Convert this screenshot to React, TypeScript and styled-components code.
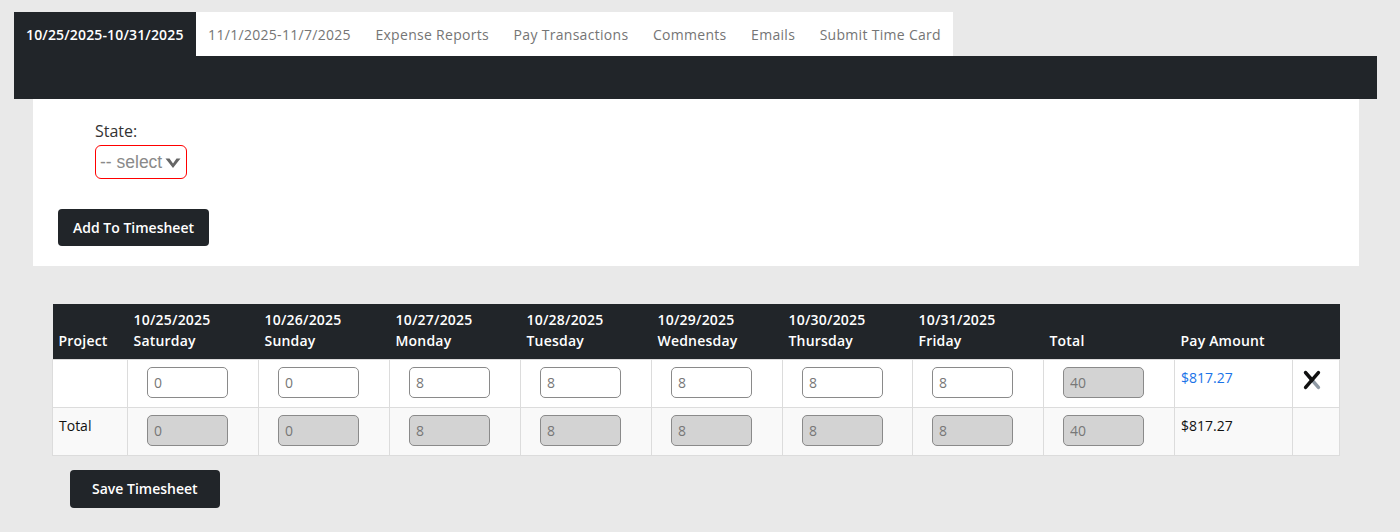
import React from "react";
import styled, { createGlobalStyle } from "styled-components";

const GlobalStyle = createGlobalStyle`
  html, body {
    margin: 0;
    padding: 0;
    background-color: #e9e9e9;
    font-family: "Open Sans", "Liberation Sans", sans-serif;
  }
`;

const tabs = [
  "10/25/2025-10/31/2025",
  "11/1/2025-11/7/2025",
  "Expense Reports",
  "Pay Transactions",
  "Comments",
  "Emails",
  "Submit Time Card",
];

const days = [
  { date: "10/25/2025", name: "Saturday", hours: 0 },
  { date: "10/26/2025", name: "Sunday", hours: 0 },
  { date: "10/27/2025", name: "Monday", hours: 8 },
  { date: "10/28/2025", name: "Tuesday", hours: 8 },
  { date: "10/29/2025", name: "Wednesday", hours: 8 },
  { date: "10/30/2025", name: "Thursday", hours: 8 },
  { date: "10/31/2025", name: "Friday", hours: 8 },
];

const colWidths = [75, 131, 131, 131, 131, 131, 130, 131, 131, 118, 47];

const App = () => {
  const total = days.reduce((a, d) => a + d.hours, 0);

  return (
    <Page>
      <GlobalStyle />
      <TabsWrapper>
        <TabList>
          {tabs.map((t, idx) => (
            <Tab key={t} $active={idx === 0}>
              {t}
            </Tab>
          ))}
        </TabList>
        <DarkBand />
      </TabsWrapper>

      <Panel>
        <FormGroup>
          <Label>State:</Label>
          <SelectBox>
            <SelectText>-- select</SelectText>
            <Chevron viewBox="0 0 16 12">
              <path d="M0.5 1.5 L8 11 L15.5 1.5 L11.5 1.5 L8 6.5 L4.5 1.5 Z" fill="#666" />
            </Chevron>
          </SelectBox>
        </FormGroup>
        <DarkButton>Add To Timesheet</DarkButton>
      </Panel>

      <TableArea>
        <Table>
          <colgroup>
            {colWidths.map((w, i) => (
              <col key={i} style={{ width: w }} />
            ))}
          </colgroup>
          <thead>
            <tr>
              <Th>Project</Th>
              {days.map((d) => (
                <Th key={d.date}>
                  {d.date}
                  <br />
                  {d.name}
                </Th>
              ))}
              <Th>Total</Th>
              <Th>Pay Amount</Th>
              <Th></Th>
            </tr>
          </thead>
          <tbody>
            <Tr>
              <Td></Td>
              {days.map((d) => (
                <Td key={d.date}>
                  <HourInput defaultValue={String(d.hours)} />
                </Td>
              ))}
              <Td>
                <HourInput value={String(total)} disabled readOnly />
              </Td>
              <Td>
                <PayLink>$817.27</PayLink>
              </Td>
              <Td>
                <DeleteIcon viewBox="0 0 24 24">
                  <path d="M5 4 L19 20" stroke="#8f99a4" strokeWidth="3.8" strokeLinecap="round" />
                  <path d="M19 4 L5 20" stroke="#111" strokeWidth="3.8" strokeLinecap="round" />
                  <path d="M5 4 L12 12" stroke="#111" strokeWidth="3.8" strokeLinecap="round" />
                </DeleteIcon>
              </Td>
            </Tr>
            <Tr $striped>
              <Td>Total</Td>
              {days.map((d) => (
                <Td key={d.date}>
                  <HourInput value={String(d.hours)} disabled readOnly />
                </Td>
              ))}
              <Td>
                <HourInput value={String(total)} disabled readOnly />
              </Td>
              <Td>$817.27</Td>
              <Td></Td>
            </Tr>
          </tbody>
        </Table>
        <SaveRow>
          <DarkButton $wide>Save Timesheet</DarkButton>
        </SaveRow>
      </TableArea>
    </Page>
  );
};

export default App;

const Page = styled.div`
  width: 1363px;
  padding: 12px 0 0 14px;
`;

const TabsWrapper = styled.div`
  display: flex;
  flex-direction: column;
`;

const TabList = styled.ul`
  display: inline-flex;
  align-self: flex-start;
  margin: 0;
  padding: 0;
  list-style: none;
  background-color: #fff;
`;

const Tab = styled.li<{ $active?: boolean }>`
  height: 44px;
  padding: 0 12.5px 0 12px;
  display: flex;
  align-items: center;
  font-size: 14px;
  letter-spacing: ${(p) => (p.$active ? "0.15px" : "0.3px")};
  font-weight: ${(p) => (p.$active ? 600 : 400)};
  color: ${(p) => (p.$active ? "#fff" : "#757575")};
  background-color: ${(p) => (p.$active ? "#212529" : "transparent")};
`;

const DarkBand = styled.div`
  height: 43px;
  background-color: #212529;
`;

const Panel = styled.div`
  margin: 0 18px 0 19px;
  height: 167px;
  box-sizing: border-box;
  background-color: #fff;
  padding: 22px 25px 0 25px;
`;

const FormGroup = styled.div`
  display: flex;
  flex-direction: column;
  align-items: flex-start;
  margin-left: 37px;
  gap: 4px;
`;

const Label = styled.label`
  font-size: 16px;
  color: #333;
  line-height: 20px;
`;

const SelectBox = styled.div`
  position: relative;
  width: 92px;
  height: 34px;
  box-sizing: border-box;
  border: 1px solid #ff0000;
  border-radius: 6px;
  display: flex;
  align-items: center;
  padding-left: 4px;
  overflow: hidden;
`;

const SelectText = styled.span`
  font-family: "Liberation Sans", Arial, sans-serif;
  font-size: 17.5px;
  color: #8a8a8a;
  white-space: nowrap;
`;

const Chevron = styled.svg`
  position: absolute;
  right: 5px;
  top: 11px;
  width: 16px;
  height: 12px;
`;

const DarkButton = styled.button<{ $wide?: boolean }>`
  margin-top: 30px;
  height: ${(p) => (p.$wide ? "38px" : "37px")};
  padding: ${(p) => (p.$wide ? "0 22px" : "0 15px")};
  border: none;
  border-radius: 4px;
  background-color: #212529;
  color: #fff;
  font-family: "Open Sans", "Liberation Sans", sans-serif;
  font-size: 14px;
  font-weight: 600;
  cursor: pointer;
`;

const TableArea = styled.div`
  margin: 38px 0 0 38px;
`;

const Table = styled.table`
  width: 1287px;
  table-layout: fixed;
  border-collapse: collapse;
  font-size: 14px;
  color: #111;
`;

const Th = styled.th`
  height: 55px;
  box-sizing: border-box;
  padding: 0 6px 8px 6px;
  vertical-align: bottom;
  text-align: left;
  background-color: #212529;
  color: #fff;
  font-weight: 600;
  letter-spacing: 0.2px;
  line-height: 21px;
`;

const Tr = styled.tr<{ $striped?: boolean }>`
  background-color: ${(p) => (p.$striped ? "#f9f9f9" : "#fff")};
`;

const Td = styled.td`
  height: 48px;
  box-sizing: border-box;
  padding: 7px 6px;
  vertical-align: top;
  border: 1px solid #dcdcdc;
  line-height: 22px;
`;

const HourInput = styled.input`
  margin-left: 13px;
  width: 81px;
  height: 31px;
  box-sizing: border-box;
  border: 1px solid #8a8a8a;
  border-radius: 5px;
  padding: 0 6px;
  font-family: "Open Sans", "Liberation Sans", sans-serif;
  font-size: 14px;
  color: #777;
  background-color: #fff;

  &:disabled {
    background-color: #d3d3d3;
    color: #777;
  }
`;

const PayLink = styled.a`
  color: #1a73e8;
  text-decoration: none;
  cursor: pointer;
`;

const DeleteIcon = styled.svg`
  width: 22px;
  height: 22px;
  margin: 2px 0 0 2px;
`;

const SaveRow = styled.div`
  padding-left: 18px;
  margin-top: -16px;
`;
